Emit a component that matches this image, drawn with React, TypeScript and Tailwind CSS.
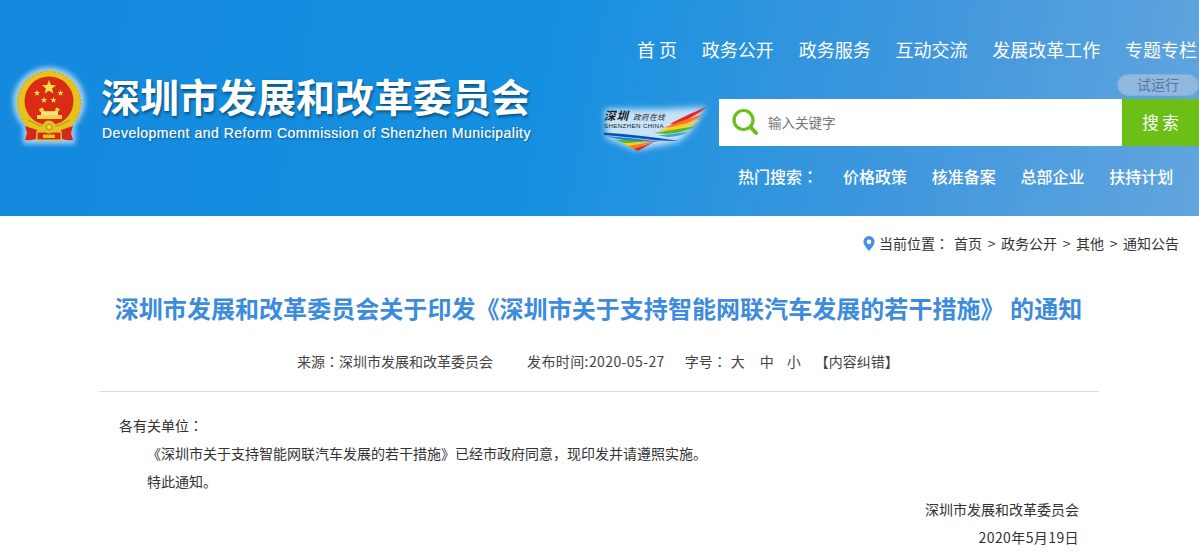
const cjk = { fontFamily: '"Microsoft YaHei","Noto Sans CJK SC","Liberation Sans",sans-serif' };
const cjkTc = { fontFamily: '"Noto Sans CJK TC","Noto Sans CJK SC",sans-serif' };

function Colon() {
  return <span style={cjkTc}>：</span>;
}

function Star({ cx, cy, r }: { cx: number; cy: number; r: number }) {
  const pts = Array.from({ length: 10 }, (_, i) => {
    const a = -Math.PI / 2 + (i * Math.PI) / 5;
    const q = i % 2 ? r * 0.42 : r;
    return `${(cx + q * Math.cos(a)).toFixed(2)},${(cy + q * Math.sin(a)).toFixed(2)}`;
  }).join(" ");
  return <polygon points={pts} fill="#f8e04a" />;
}

function Emblem() {
  return (
    <svg width="84" height="88" viewBox="0 0 84 88" className="shrink-0">
      <defs>
        <filter id="glow" x="-20%" y="-20%" width="140%" height="140%">
          <feGaussianBlur stdDeviation="2.5" />
        </filter>
      </defs>
      <path d="M41 5 C60 5 77 20 77 40 C77 52 70 60 67 64 L67 82 H15 L15 64 C11 60 5 52 5 40 C5 20 22 5 41 5 Z" fill="#ffffff" opacity="0.6" filter="url(#glow)" />
      <circle cx="41" cy="41" r="32" fill="#e6c21f" />
      <circle cx="41" cy="41" r="31.5" fill="none" stroke="#cfa018" strokeWidth="1" strokeDasharray="2 2.5" />
      <path d="M41 6 L39 10 H43 Z" fill="#e6c21f" />
      <circle cx="41" cy="39" r="24.5" fill="#d92b16" />
      <Star cx={41} cy={25.5} r={7.5} />
      <Star cx={29} cy={31} r={3.3} />
      <Star cx={52.5} cy={31} r={3.3} />
      <Star cx={36} cy={38} r={3.3} />
      <Star cx={45.5} cy={38} r={3.3} />
      <path d="M31 47 L35 45.5 L36 49 H47 L48 45.5 L52 47 L50 50 H32 Z" fill="#f2d34a" />
      <rect x="33" y="50" width="17" height="3" fill="#f6e27a" />
      <rect x="29" y="53" width="25" height="4" fill="#f2d34a" />
      <path d="M16 52 Q41 74 66 52 L66 60 Q41 80 16 60 Z" fill="#e6c21f" />
      <path d="M20 58 Q41 72 62 58" fill="none" stroke="#b98a14" strokeWidth="1" />
      <path d="M17 64 L29 68 L28 77 Q22 79 17 78 L19 71 Z" fill="#d4291a" />
      <path d="M65 64 L53 68 L54 77 Q60 79 65 78 L63 71 Z" fill="#d4291a" />
      <rect x="29" y="70" width="24" height="8" fill="#d4291a" stroke="#e6c21f" strokeWidth="1.2" />
      <rect x="35" y="72.5" width="12" height="3.5" fill="#e6c21f" />
      <circle cx="41" cy="65" r="6.5" fill="#e6c21f" />
      <circle cx="41" cy="65" r="3.6" fill="#c99b18" />
      <circle cx="41" cy="65" r="2" fill="#f3db63" />
    </svg>
  );
}

function Rainbow() {
  return (
    <svg width="114" height="56" viewBox="0 0 114 56" className="shrink-0 mt-[1px]">
      <defs>
        <filter id="soft" x="-10%" y="-20%" width="120%" height="140%">
          <feGaussianBlur stdDeviation="3" />
        </filter>
      </defs>
      <path d="M7 9 H66 L108 7 L92 32 L80 42 L38 50 L8 38 Z" fill="#ffffff" opacity="0.75" filter="url(#soft)" />
      <path d="M109 7 Q92 13 72 24 L79 24.5 Q96 17 109 7 Z" fill="#e8242a" />
      <path d="M106 14 Q88 19 66 27.5 L76 27.5 Q94 23 106 14 Z" fill="#f47a22" />
      <path d="M103 20 Q84 24 60 30.5 L72 31 Q90 28 103 20 Z" fill="#f4d21e" />
      <path d="M98 26 Q80 29 56 33 L68 34 Q86 33 98 26 Z" fill="#62b22c" />
      <path d="M91 31.5 Q76 34 60 35.5 L70 37 Q82 36.5 91 31.5 Z" fill="#35a8dc" />
      <path d="M6 32.5 Q44 35 81 41 L60 40.5 Q34 37.5 6 35 Z" fill="#0b50b4" />
      <path d="M8 36 Q36 38 62 41.5 L40 42 Q22 40 8 36 Z" fill="#1c87d8" />
      <path d="M17 39.5 Q30 40.5 48 41 L28 44 Z" fill="#5cb430" />
      <path d="M24 43 Q38 43.5 52 40.5 L33 47 Z" fill="#f4d21e" />
      <path d="M30 46 Q44 44 56 40.5 L37 49.5 Z" fill="#f47a22" />
      <path d="M36 49 Q48 45.5 60 39.5 L40 51 Z" fill="#e8242a" />
      <text x="6" y="20" fontSize="11.5" fontStyle="italic" fontWeight="700" letterSpacing="1" fill="#1a1a1a" style={cjk}>深圳</text>
      <text x="35" y="19.5" fontSize="7.5" fontStyle="italic" letterSpacing="0.6" fill="#222" style={cjk}>政府在线</text>
      <text x="6" y="28" fontSize="6.2" letterSpacing="0.35" fill="#1a1a1a" fontFamily="Liberation Sans">SHENZHEN CHINA</text>
    </svg>
  );
}

function SearchGlyph() {
  return (
    <svg width="28" height="30" viewBox="0 0 28 30" fill="none" className="shrink-0">
      <circle cx="11.5" cy="12" r="9.5" stroke="#6cbf16" strokeWidth="3.2" />
      <path d="M19 19.5 L24 25" stroke="#6cbf16" strokeWidth="4" strokeLinecap="round" />
    </svg>
  );
}

const nav = ["首 页", "政务公开", "政务服务", "互动交流", "发展改革工作", "专题专栏"];
const hot = ["价格政策", "核准备案", "总部企业", "扶持计划"];
const crumbs = ["政务公开", "其他", "通知公告"];

export default function App() {
  return (
    <div className="w-[1199px] h-[552px] overflow-hidden bg-white text-[#333]" style={cjk}>
      <header className="h-[216px] flex bg-[linear-gradient(100deg,#1489de_0%,#1590e0_45%,#3f97dd_75%,#62a5de_100%)]">
        <div className="w-[598px] shrink-0 flex items-start pl-[8px] pt-[62px]">
          <Emblem />
          <div className="ml-[9px] pt-[10px]">
            <div className="text-[39px] leading-[46px] font-bold text-white [text-shadow:1px_2px_3px_rgba(0,0,0,0.45)] whitespace-nowrap">
              深圳市发展和改革委员会
            </div>
            <div
              className="mt-[6px] ml-[1px] text-[14px] leading-[18px] text-white tracking-[0.5px] whitespace-nowrap [-webkit-text-stroke:0.2px_white] [text-shadow:1px_1px_2px_rgba(0,0,0,0.4)]"
              style={{ fontFamily: '"Liberation Sans",sans-serif' }}
            >
              Development and Reform Commission of Shenzhen Municipality
            </div>
          </div>
        </div>
        <div className="w-[601px] shrink-0 overflow-hidden relative">
          <nav className="flex gap-[24.8px] pl-[39px] pt-[37px] text-[18px] leading-[24px] text-white whitespace-nowrap">
            {nav.map((n) => (
              <span key={n}>{n}</span>
            ))}
          </nav>
          <div className="h-[38px] flex justify-end items-end pb-[3px]">
            <span className="w-[82px] h-[22px] rounded-full bg-[#91b8df] border border-[#7fb0e0] text-[#55789f] text-[14px] leading-[19px] text-center">
              试运行
            </span>
          </div>
          <div className="flex items-start h-[47px]">
            <Rainbow />
            <div className="ml-[7px] flex-1 h-[47px] bg-white flex items-center pl-[13px]">
              <SearchGlyph />
              <span className="ml-[8px] text-[13.5px] text-[#777]">输入关键字</span>
            </div>
            <div className="w-[77px] h-[47px] bg-[#6cbf16] text-white text-[16.5px] flex items-center justify-center whitespace-pre">
              搜 索
            </div>
          </div>
          <div className="flex pl-[140px] pt-[18px] text-[16px] leading-[24px] font-medium text-white whitespace-nowrap">
            <span className="mr-[25px]">热门搜索<Colon /></span>
            <div className="flex gap-[24.7px]">
              {hot.map((h) => (
                <span key={h}>{h}</span>
              ))}
            </div>
          </div>
        </div>
      </header>

      <div className="flex justify-end items-center h-[20px] mt-[17px] pr-[20px] text-[14px] text-[#333] whitespace-nowrap">
        <svg width="12" height="15" viewBox="0 0 12 15" className="mr-[4px]">
          <path fillRule="evenodd" d="M6 0a5.6 5.6 0 0 0-5.6 5.6C.4 9.6 6 15 6 15s5.6-5.4 5.6-9.4A5.6 5.6 0 0 0 6 0Zm0 3.4a2.3 2.3 0 1 1 0 4.6 2.3 2.3 0 0 1 0-4.6Z" fill="#4a8fe0" />
        </svg>
        <span className="mr-[5px]">当前位置<Colon /></span>
        <span>首页</span>
        {crumbs.map((c) => (
          <span key={c}>
            <span className="mx-[5.6px]">&gt;</span>
            {c}
          </span>
        ))}
      </div>

      <h1 className="mt-[38px] pr-[2px] text-center text-[24px] leading-[34px] tracking-[0.05px] font-bold text-[#3d8bdc] whitespace-nowrap">
        深圳市发展和改革委员会关于印发《深圳市关于支持智能网联汽车发展的若干措施》 的通知
      </h1>

      <div className="ml-[99px] mr-[100px] mt-[27px] h-[40px] border-b border-[#dcdcdc] flex pl-[198px] text-[14px] leading-[18px] text-[#444] whitespace-nowrap">
        <span>来源<Colon />深圳市发展和改革委员会</span>
        <span className="ml-[34px] tracking-[0.4px]">发布时间:2020-05-27</span>
        <span className="ml-[20px]">字号<Colon /></span>
        <span className="ml-[4px]">大</span>
        <span className="ml-[15px]">中</span>
        <span className="ml-[13px]">小</span>
        <span className="ml-[14px]">【内容纠错】</span>
      </div>

      <article className="ml-[99px] mr-[100px] pt-[19px] px-[20px] text-[14px] leading-[28px] text-[#333] whitespace-nowrap">
        <p>各有关单位<Colon /></p>
        <p className="pl-[28px]">《深圳市关于支持智能网联汽车发展的若干措施》已经市政府同意，现印发并请遵照实施。</p>
        <p className="pl-[28px]">特此通知。</p>
        <p className="text-right">深圳市发展和改革委员会</p>
        <p className="text-right tracking-[0.4px]">2020年5月19日</p>
      </article>
    </div>
  );
}
